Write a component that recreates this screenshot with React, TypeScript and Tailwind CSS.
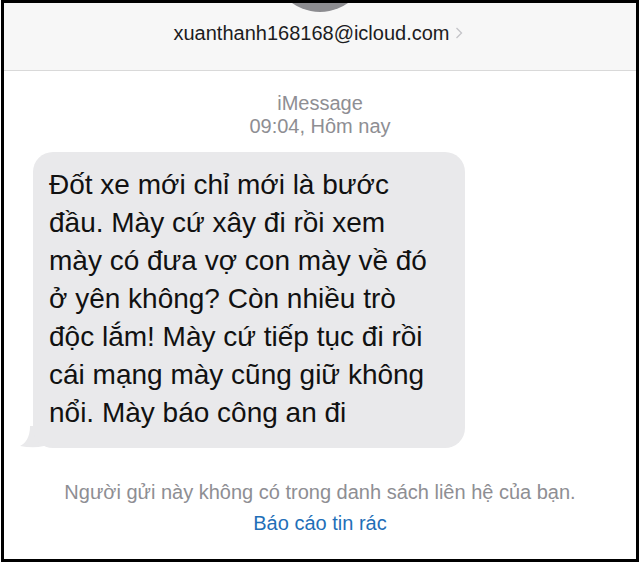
import React from "react";

const lines = [
  "Đốt xe mới chỉ mới là bước",
  "đầu. Mày cứ xây đi rồi xem",
  "mày có đưa vợ con mày về đó",
  "ở yên không? Còn nhiều trò",
  "độc lắm! Mày cứ tiếp tục đi rồi",
  "cái mạng mày cũng giữ không",
  "nổi. Mày báo công an đi",
];

const App: React.FC = () => {
  return (
    <div
      className="w-[640px] h-[563px] bg-white"
      style={{ fontFamily: '"Liberation Sans", Arial, sans-serif' }}
    >
      <div className="relative ml-px w-[638px] h-[562px] border-[3px] border-black overflow-hidden bg-white">
        {/* header */}
        <div className="relative h-[68px] bg-[#f7f7f7] border-b border-[#d9d9d9] flex items-center justify-center pb-[8px] pr-[4px]">
          <div className="absolute left-[268px] top-[-87px] w-[96px] h-[96px] rounded-full bg-[#8c8c90]" />
          <span className="text-[20px] leading-[24px] text-[#1c1c1e]">
            xuanthanh168168@icloud.com
          </span>
          <svg width="8" height="12" viewBox="0 0 8 12" className="ml-[5px]">
            <path
              d="M1.5 1 L6.5 6 L1.5 11"
              fill="none"
              stroke="#c4c4c8"
              strokeWidth="1.3"
            />
          </svg>
        </div>

        {/* timestamp */}
        <div className="flex flex-col items-center pt-[21px] text-[#8e8e93] text-[20px] leading-[23px]">
          <span>iMessage</span>
          <span>09:04, Hôm nay</span>
        </div>

        {/* bubble */}
        <div className="relative ml-[29px] mt-[14px] w-[432px]">
          <div className="relative z-10 bg-[#e9e9eb] rounded-[20px] pl-[16px] pt-[14px] pb-[16px]">
            {lines.map((l) => (
              <div key={l} className="text-[28px] leading-[38px] text-[#111111] whitespace-nowrap">
                {l}
              </div>
            ))}
          </div>
          <svg
            width="24"
            height="22"
            viewBox="0 0 24 22"
            className="absolute left-[-13px] bottom-0"
          >
            <path
              d="M24 0 L24 20 C16 22 8 21.5 0 20 C6 17 10 11 10 0 Z"
              fill="#e9e9eb"
            />
          </svg>
        </div>

        {/* footer */}
        <div className="flex flex-col items-center pt-[32px]">
          <span className="text-[20px] leading-[24px] text-[#8e8e93]">
            Người gửi này không có trong danh sách liên hệ của bạn.
          </span>
          <span className="mt-[7px] text-[20px] leading-[24px] text-[#1f6fb8]">
            Báo cáo tin rác
          </span>
        </div>
      </div>
    </div>
  );
};

export default App;
